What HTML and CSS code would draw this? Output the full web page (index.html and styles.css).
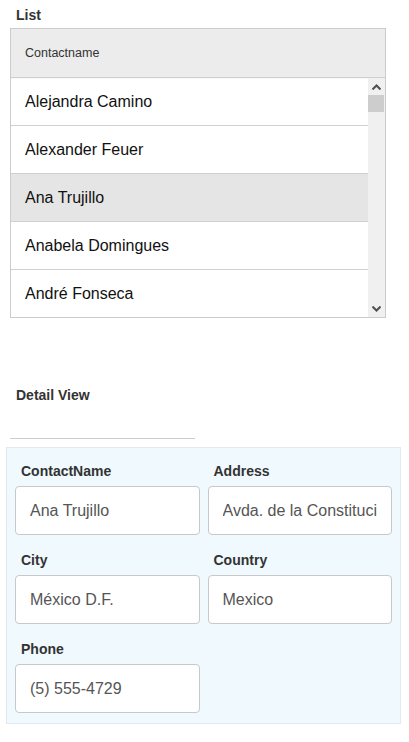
FILE: index.html
```html
<!DOCTYPE html>
<html>
<head>
<meta charset="utf-8">
<link rel="stylesheet" href="styles.css">
</head>
<body>
<div class="page">
  <div class="section-title list-title">List</div>
  <div class="listbox">
    <div class="list-header">Contactname</div>
    <div class="list-body">
      <div class="rows">
        <div class="row">Alejandra Camino</div>
        <div class="row">Alexander Feuer</div>
        <div class="row selected">Ana Trujillo</div>
        <div class="row">Anabela Domingues</div>
        <div class="row">André Fonseca</div>
      </div>
      <div class="scrollbar">
        <div class="sb-btn">
          <svg width="9" height="6" viewBox="0 0 9 6"><path d="M0.5 5.5 L4.5 1.5 L8.5 5.5" fill="none" stroke="#505050" stroke-width="2"/></svg>
        </div>
        <div class="sb-thumb"></div>
        <div class="sb-track"></div>
        <div class="sb-btn">
          <svg width="9" height="6" viewBox="0 0 9 6"><path d="M0.5 0.5 L4.5 4.5 L8.5 0.5" fill="none" stroke="#505050" stroke-width="2"/></svg>
        </div>
      </div>
    </div>
  </div>

  <div class="section-title detail-title">Detail View</div>
  <div class="divider"></div>
  <div class="detail">
    <div class="field">
      <label class="field-label">ContactName</label>
      <input class="field-input" type="text" value="Ana Trujillo" readonly>
    </div>
    <div class="field">
      <label class="field-label">Address</label>
      <input class="field-input" type="text" value="Avda. de la Constitución 2222" readonly>
    </div>
    <div class="field">
      <label class="field-label">City</label>
      <input class="field-input" type="text" value="México D.F." readonly>
    </div>
    <div class="field">
      <label class="field-label">Country</label>
      <input class="field-input" type="text" value="Mexico" readonly>
    </div>
    <div class="field">
      <label class="field-label">Phone</label>
      <input class="field-input" type="text" value="(5) 555-4729" readonly>
    </div>
  </div>
</div>
</body>
</html>
```
FILE: styles.css
```css
* { box-sizing: border-box; }
html, body { margin: 0; padding: 0; background: #fff; }
body {
  font-family: "Liberation Sans", Arial, sans-serif;
  color: #333;
  width: 409px;
  height: 742px;
  overflow: hidden;
}
.page {
  padding-top: 5px;
}
.section-title {
  font-weight: bold;
  font-size: 14px;
  line-height: 20px;
  color: #333;
  padding-left: 16px;
}
.list-title {
  margin-bottom: 3px;
}
.listbox {
  margin-left: 10px;
  width: 376px;
  border: 1px solid #cccccc;
}
.list-header {
  height: 49px;
  background: #ececec;
  border-bottom: 1px solid #cfcfcf;
  font-size: 12.5px;
  line-height: 48px;
  padding-left: 14px;
  color: #333;
}
.list-body {
  display: flex;
  height: 239px;
  overflow: hidden;
}
.rows {
  flex: 1;
  overflow: hidden;
  border-top: 1px solid #f6f6f6;
}
.row {
  height: 48px;
  border-bottom: 1px solid #d0d0d0;
  font-size: 16px;
  line-height: 47px;
  padding-left: 14px;
  color: #111;
}
.row:first-child {
  height: 47px;
  line-height: 46px;
}
.row.selected {
  background: #e5e5e5;
}
.scrollbar {
  width: 17px;
  background: #f0f0f0;
  display: flex;
  flex-direction: column;
}
.sb-btn {
  height: 17px;
  display: flex;
  align-items: center;
  justify-content: center;
}
.sb-thumb {
  height: 17px;
  margin: 0 1px 0 0;
  background: #cdcdcd;
}
.sb-track {
  flex: 1;
}
.detail-title {
  margin-top: 67px;
}
.divider {
  margin: 33px 0 0 10px;
  width: 185px;
  height: 1px;
  background: #cccccc;
}
.detail {
  margin: 8px 0 0 6px;
  width: 395px;
  background: #f0f9fe;
  border: 1px solid #e2eaee;
  padding: 13px 8px 10px 8px;
  display: grid;
  grid-template-columns: 1fr 1fr;
  column-gap: 8px;
  row-gap: 15px;
}
.field {
  display: flex;
  flex-direction: column;
  min-width: 0;
}
.field-label {
  font-weight: bold;
  font-size: 14px;
  line-height: 20px;
  color: #333;
  padding-left: 6px;
  margin-bottom: 5px;
}
.field-input {
  height: 49px;
  width: 100%;
  border: 1px solid #c8c8c8;
  border-radius: 4px;
  background: #fff;
  font-family: "Liberation Sans", Arial, sans-serif;
  font-size: 16px;
  color: #555;
  padding: 0 14px;
  margin: 0;
  outline: none;
}
```
